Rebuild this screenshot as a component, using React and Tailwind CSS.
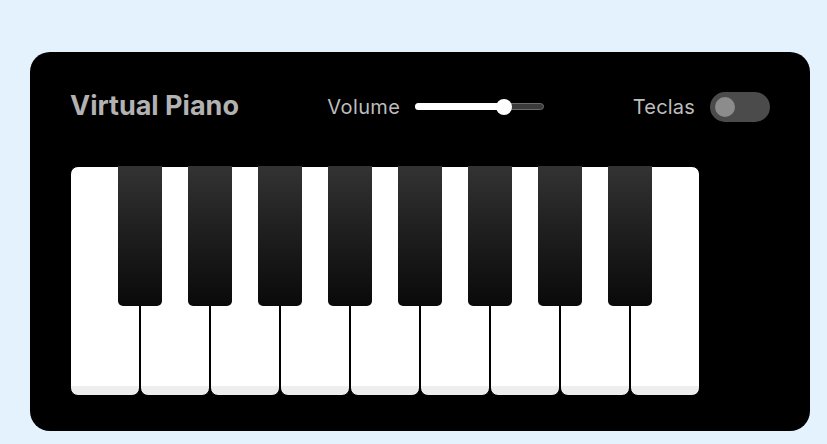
const KEYS = ["w1", "b1", "w2", "b2", "w3", "b3", "w4", "b4", "w5", "b5", "w6", "b6", "w7", "b7", "w8", "b8", "w9"];

const VOLUME = 0.69;

export default function App() {
  return (
    <div
      className="min-h-[444px] w-full bg-[#e3f2fd] pl-[30px] pt-[52px]"
      style={{ fontFamily: "Inter, 'Noto Sans', sans-serif" }}
    >
      <div className="w-[780px] rounded-[20px] bg-black px-[40px] pt-[35px] pb-[35px]">
        <header className="flex h-[39px] items-center justify-between text-[#b2b2b2]">
          <h2 className="text-[27px] font-bold">Virtual Piano</h2>

          <div className="flex items-center">
            <span className="mr-[15px] text-[20px] font-normal tracking-[0.4px] text-[#bdbdbd]">Volume</span>
            <div className="relative flex h-[16px] w-[129px] items-center">
              <div className="h-[7px] w-full rounded-full border border-[#6b6b6b] bg-[#3b3b3b]" />
              <div
                className="absolute left-0 h-[7px] rounded-full bg-white"
                style={{ width: `${VOLUME * 100}%` }}
              />
              <div
                className="absolute h-[16px] w-[16px] -translate-x-1/2 rounded-full bg-white"
                style={{ left: `${VOLUME * 100}%` }}
              />
            </div>
          </div>

          <div className="flex items-center">
            <span className="mr-[15px] text-[20px] font-normal tracking-[0.2px] text-[#bdbdbd]">Teclas</span>
            <div className="flex h-[30px] w-[60px] items-center rounded-full bg-[#4b4b4b] pl-[5px]">
              <div className="h-[20px] w-[20px] rounded-full bg-[#8c8c8c]" />
            </div>
          </div>
        </header>

        <ul className="mt-[40px] flex list-none">
          {KEYS.map((k) =>
            k.startsWith("b") ? (
              <li
                key={k}
                className="z-10 -mx-[22px] h-[140px] w-[44px] rounded-b-[5px] bg-gradient-to-b from-[#333] to-[#0a0a0a]"
              />
            ) : (
              <li
                key={k}
                className="h-[230px] w-[70px] rounded-[8px] border border-black bg-[linear-gradient(#fff_96%,#eee_4%)]"
              />
            )
          )}
        </ul>
      </div>
    </div>
  );
}
